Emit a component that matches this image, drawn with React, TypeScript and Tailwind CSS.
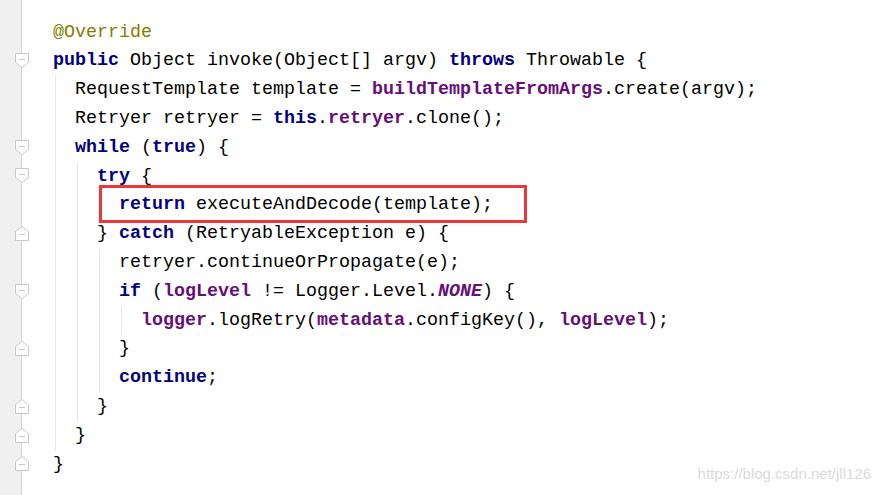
import React from 'react';

type Fold = 'open' | 'close' | null;

// fold markers in the gutter, one slot per code line
const folds: Fold[] = [null, 'open', null, null, 'open', 'open', null, 'close', null, 'open', null, 'close', null, 'close', 'close', 'close'];

const Kw = ({ children }: { children: React.ReactNode }) => (
  <span className="font-bold text-[#000080]">{children}</span>
);
const Fd = ({ children }: { children: React.ReactNode }) => (
  <span className="font-bold text-[#660e7a]">{children}</span>
);

const FoldMark = ({ kind }: { kind: Fold }) => {
  if (!kind) return null;
  return (
    <svg width="14" height="15" viewBox="0 0 14 15" className="block shrink-0">
      {kind === 'open' ? (
        <path d="M0.5 0.5H13.5V9.5L7 14.5L0.5 9.5Z" fill="#fff" stroke="#c8c8c8" />
      ) : (
        <path d="M0.5 14.5H13.5V5.5L7 0.5L0.5 5.5Z" fill="#fff" stroke="#c8c8c8" />
      )}
      <path d={kind === 'open' ? 'M4 6.5H10' : 'M4 8.5H10'} stroke="#c8c8c8" />
    </svg>
  );
};

const Line = ({ children }: { children?: React.ReactNode }) => (
  <div className="h-[28.8px] leading-[28.8px] whitespace-pre">{children}</div>
);

// indented block body with its indent guide on the left
const Body = ({ children }: { children: React.ReactNode }) => (
  <div className="ml-[2px] border-l border-[#e4e4e4] pl-[19px]">{children}</div>
);

export default function App() {
  return (
    <div className="relative flex h-[495px] w-[881px] overflow-hidden bg-white">
      {/* Gutter */}
      <div className="relative z-10 w-[22px] shrink-0 border-r border-[#d8d8d8] bg-[#f0f0f0] pt-[17.5px]">
        {folds.map((f, i) => (
          <div key={i} className="flex h-[28.8px] w-[40px] items-center pl-[15px]">
            <FoldMark kind={f} />
          </div>
        ))}
      </div>

      {/* Code */}
      <div
        className="pl-[31px] pt-[18.6px] text-[18.33px] text-black"
        style={{ fontFamily: '"Liberation Mono", "DejaVu Sans Mono", monospace' }}
      >
        <Line><span className="text-[#808000]">@Override</span></Line>
        <Line><Kw>public</Kw> Object invoke(Object[] argv) <Kw>throws</Kw> Throwable {'{'}</Line>
        <Body>
          <Line>RequestTemplate template = <Fd>buildTemplateFromArgs</Fd>.create(argv);</Line>
          <Line>Retryer retryer = <Kw>this</Kw>.<Fd>retryer</Fd>.clone();</Line>
          <Line><Kw>while</Kw> (<Kw>true</Kw>) {'{'}</Line>
          <Body>
            <Line><Kw>try</Kw> {'{'}</Line>
            <Body>
              <div className="relative">
                <Line><Kw>return</Kw> executeAndDecode(template);</Line>
                <div className="pointer-events-none absolute -top-[6.6px] -bottom-[2.6px] -left-[20px] w-[428px] border-[3px] border-[#ee3636]" />
              </div>
            </Body>
            <Line>{'} '}<Kw>catch</Kw> (RetryableException e) {'{'}</Line>
            <Body>
              <Line>retryer.continueOrPropagate(e);</Line>
              <Line><Kw>if</Kw> (<Fd>logLevel</Fd> != Logger.Level.<span className="font-bold italic text-[#660e7a]">NONE</span>) {'{'}</Line>
              <Body>
                <Line><Fd>logger</Fd>.logRetry(<Fd>metadata</Fd>.configKey(), <Fd>logLevel</Fd>);</Line>
              </Body>
              <Line>{'}'}</Line>
              <Line><Kw>continue</Kw>;</Line>
            </Body>
            <Line>{'}'}</Line>
          </Body>
          <Line>{'}'}</Line>
        </Body>
        <Line>{'}'}</Line>
      </div>

      {/* Watermark */}
      <div
        className="absolute bottom-[10px] right-[10px] text-[15px] text-[#dadada]"
        style={{ fontFamily: '"Liberation Sans", Arial, sans-serif' }}
      >
        https://blog.csdn.net/jll126
      </div>
    </div>
  );
}
